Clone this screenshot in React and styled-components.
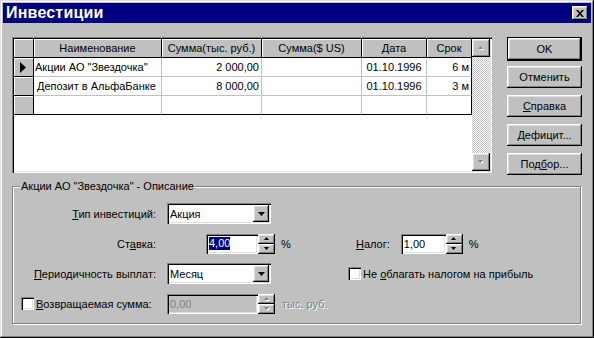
import React from "react";
import styled, { createGlobalStyle } from "styled-components";

const GlobalStyle = createGlobalStyle`
  html, body {
    margin: 0;
    padding: 0;
    background: #c0c0c0;
  }
  * {
    box-sizing: border-box;
  }
`;

const raised = `
  box-shadow: inset -1px -1px #000, inset 1px 1px #fff,
    inset -2px -2px #808080, inset 2px 2px #dfdfdf;
`;

const sunken = `
  box-shadow: inset 1px 1px #808080, inset 2px 2px #000,
    inset -1px -1px #fff, inset -2px -2px #dfdfdf;
`;

const rows = [
  { name: 'Акции АО "Звездочка"', rub: "2 000,00", usd: "", date: "01.10.1996", term: "6 м", current: true },
  { name: "Депозит в АльфаБанке", rub: "8 000,00", usd: "", date: "01.10.1996", term: "3 м" },
  { name: "", rub: "", usd: "", date: "", term: "" },
];

const buttons = [
  { label: "OK", isDefault: true },
  { label: "Отменить" },
  { label: <><u>С</u>правка</> },
  { label: <><u>Д</u>ефицит...</> },
  { label: <>Под<u>б</u>ор...</> },
];

function DownArrow({ color = "#000" }) {
  return (
    <svg width="7" height="4" viewBox="0 0 7 4">
      <path d="M0 0h7L3.5 4z" fill={color} />
    </svg>
  );
}

function SpinArrow({ up, disabled }) {
  const d = up ? "M2.5 0L0 3h5z" : "M0 0h5L2.5 3z";
  return (
    <svg width="6" height="4" viewBox="0 0 6 4">
      {disabled && <path d={d} fill="#fff" transform="translate(1 1)" />}
      <path d={d} fill={disabled ? "#808080" : "#000"} />
    </svg>
  );
}

function Spinner({ disabled }) {
  return (
    <Spin>
      <SpinBtn>
        <SpinArrow up disabled={disabled} />
      </SpinBtn>
      <SpinBtn>
        <SpinArrow disabled={disabled} />
      </SpinBtn>
    </Spin>
  );
}

function Combo({ value }) {
  return (
    <ComboBox>
      <ComboText>{value}</ComboText>
      <DropBtn>
        <DownArrow />
      </DropBtn>
    </ComboBox>
  );
}

export default function App() {
  return (
    <>
      <GlobalStyle />
      <Window>
        <TitleBar>
          <Title>Инвестиции</Title>
          <CloseBtn>
            <svg width="8" height="7" viewBox="0 0 8 7">
              <path d="M0 0h2l2 2.2L6 0h2L5 3.5 8 7H6L4 4.8 2 7H0l3-3.5z" fill="#000" />
            </svg>
          </CloseBtn>
        </TitleBar>

        <Body>
          <TopRow>
            <GridFrame>
              <Table>
                <HeadCell />
                <HeadCell>Наименование</HeadCell>
                <HeadCell>Сумма(тыс. руб.)</HeadCell>
                <HeadCell>Сумма($ US)</HeadCell>
                <HeadCell>Дата</HeadCell>
                <HeadCell>Срок</HeadCell>
                {rows.map((r, i) => {
                  const last = i === rows.length - 1;
                  return (
                    <React.Fragment key={i}>
                      <IndCell>
                        {r.current && (
                          <svg width="6" height="11" viewBox="0 0 6 11">
                            <path d="M0 0l6 5.5L0 11z" fill="#000" />
                          </svg>
                        )}
                      </IndCell>
                      <Cell $last={last} $indent={!r.current}>{r.name}</Cell>
                      <Cell $last={last} $align="right">{r.rub}</Cell>
                      <Cell $last={last} $align="right">{r.usd}</Cell>
                      <Cell $last={last} $align="center">{r.date}</Cell>
                      <Cell $last={last} $edge $align="right">{r.term}</Cell>
                    </React.Fragment>
                  );
                })}
              </Table>
              <Scrollbar>
                <ScrollBtn>
                  <SpinArrow up disabled />
                </ScrollBtn>
                <Track />
                <ScrollBtn>
                  <SpinArrow disabled />
                </ScrollBtn>
              </Scrollbar>
            </GridFrame>

            <ButtonColumn>
              {buttons.map((b, i) => (
                <Button key={i} $default={b.isDefault}>
                  {b.label}
                </Button>
              ))}
            </ButtonColumn>
          </TopRow>

          <Group>
            <Legend>Акции АО "Звездочка" - Описание</Legend>
            <Form>
              <Label>
                <u>Т</u>ип инвестиций:
              </Label>
              <Cell2>
                <Combo value="Акция" />
              </Cell2>
              <span />
              <span />

              <Label>
                Ст<u>а</u>вка:
              </Label>
              <Cell2 $end>
                <Field $w={52}>
                  <Selected>4,00</Selected>
                </Field>
                <Spinner />
              </Cell2>
              <Suffix>%</Suffix>
              <RightCell $pad={8}>
                <InlineLabel>
                  <u>Н</u>алог:
                </InlineLabel>
                <Field $w={45}>1,00</Field>
                <Spinner />
                <Percent>%</Percent>
              </RightCell>

              <Label>
                <u>П</u>ериодичность выплат:
              </Label>
              <Cell2>
                <Combo value="Месяц" />
              </Cell2>
              <span />
              <RightCell>
                <Checkbox />
                <CheckText>
                  Не <u>о</u>благать налогом на прибыль
                </CheckText>
              </RightCell>

              <CheckLabel>
                <Checkbox />
                <CheckText>
                  <u>В</u>озвращаемая сумма:
                </CheckText>
              </CheckLabel>
              <Cell2>
                <Field $w={91} $disabled>
                  0,00
                </Field>
                <Spinner disabled />
              </Cell2>
              <Suffix $disabled $pad={7}>
                тыс. руб.
              </Suffix>
              <span />
            </Form>
          </Group>
        </Body>
      </Window>
    </>
  );
}

const Window = styled.div`
  width: 594px;
  height: 338px;
  padding: 3px;
  background: #c0c0c0;
  font-family: "Liberation Sans", Arial, sans-serif;
  font-size: 11px;
  color: #000;
  box-shadow: inset -1px -1px #000, inset 1px 1px #dfdfdf,
    inset -2px -2px #808080, inset 2px 2px #fff;
  display: flex;
  flex-direction: column;
`;

const TitleBar = styled.div`
  height: 20px;
  background: #000080;
  display: flex;
  align-items: center;
  justify-content: space-between;
  padding: 0 3px 0 3px;
`;

const Title = styled.span`
  color: #fff;
  font-weight: bold;
  font-size: 16px;
  letter-spacing: 0.2px;
`;

const CloseBtn = styled.div`
  width: 16px;
  height: 14px;
  background: #c0c0c0;
  ${raised}
  display: flex;
  align-items: center;
  justify-content: center;
  padding-right: 1px;
`;

const Body = styled.div`
  padding: 14px 9px 0 9px;
  display: flex;
  flex-direction: column;
`;

const TopRow = styled.div`
  display: flex;
  align-items: flex-start;
  height: 136px;
`;

const GridFrame = styled.div`
  width: 480px;
  height: 136px;
  padding: 2px;
  background: #fff;
  ${sunken}
  display: flex;
`;

const Table = styled.div`
  display: grid;
  grid-template-columns: 20px 128px 100px 100px 65px 45px;
  grid-auto-rows: 19px;
  align-content: start;
  width: 458px;
`;

const HeadCell = styled.div`
  background: #c0c0c0;
  border-right: 1px solid #000;
  border-bottom: 1px solid #000;
  box-shadow: inset 1px 1px #fff;
  display: flex;
  align-items: center;
  justify-content: center;
  white-space: nowrap;
  overflow: hidden;
`;

const IndCell = styled(HeadCell)`
  justify-content: flex-start;
  padding-left: 6px;
`;

const Cell = styled.div`
  background: #fff;
  border-right: 1px solid ${(p) => (p.$edge ? "#000" : "#c0c0c0")};
  border-bottom: 1px solid ${(p) => (p.$last ? "#000" : "#c0c0c0")};
  display: flex;
  align-items: center;
  justify-content: ${(p) =>
    p.$align === "right" ? "flex-end" : p.$align === "center" ? "center" : "flex-start"};
  padding: 0 ${(p) => (p.$align === "right" ? "2px" : "1px")} 0
    ${(p) => (p.$indent ? "3px" : "1px")};
  white-space: nowrap;
  overflow: hidden;
`;

const Scrollbar = styled.div`
  width: 18px;
  display: flex;
  flex-direction: column;
`;

const ScrollBtn = styled.div`
  width: 18px;
  height: 18px;
  background: #c0c0c0;
  ${raised}
  display: flex;
  align-items: center;
  justify-content: center;
`;

const Track = styled.div`
  flex: 1;
  background: repeating-conic-gradient(#c0c0c0 0 25%, #fff 0 50%) 0 0 / 2px 2px;
`;

const ButtonColumn = styled.div`
  margin-left: 15px;
  display: flex;
  flex-direction: column;
  gap: 7px;
`;

const Button = styled.div`
  width: 75px;
  height: ${(p) => (p.$default ? "24px" : "22px")};
  margin-bottom: ${(p) => (p.$default ? "-2px" : "0")};
  background: #c0c0c0;
  ${raised}
  border: ${(p) => (p.$default ? "1px solid #000" : "none")};
  display: flex;
  align-items: center;
  justify-content: center;
  font-size: 11px;
`;

const Group = styled.div`
  position: relative;
  margin-top: 13px;
  margin-right: 1px;
  height: 138px;
  border: 1px solid #808080;
  box-shadow: inset 1px 1px #fff, 1px 1px #fff;
  padding-top: 16px;
`;

const Legend = styled.span`
  position: absolute;
  top: -7px;
  left: 7px;
  padding: 0 1px;
  background: #c0c0c0;
  line-height: 13px;
`;

const Form = styled.div`
  display: grid;
  grid-template-columns: 154px 108px 73px 1fr;
  grid-auto-rows: 21px;
  row-gap: 9px;
  align-items: center;
`;

const Label = styled.div`
  text-align: right;
  padding-right: 11px;
  white-space: nowrap;
`;

const CheckLabel = styled.div`
  display: flex;
  align-items: center;
  padding-left: 8px;
  white-space: nowrap;
`;

const Cell2 = styled.div`
  display: flex;
  align-items: center;
  justify-content: ${(p) => (p.$end ? "flex-end" : "flex-start")};
`;

const RightCell = styled.div`
  display: flex;
  align-items: center;
  padding-left: ${(p) => p.$pad || 0}px;
`;

const InlineLabel = styled.span`
  margin-right: 11px;
`;

const ComboBox = styled.div`
  width: 104px;
  height: 21px;
  background: #fff;
  ${sunken}
  padding: 2px;
  display: flex;
  align-items: stretch;
`;

const ComboText = styled.div`
  flex: 1;
  display: flex;
  align-items: center;
  padding-left: 1px;
`;

const DropBtn = styled.div`
  width: 16px;
  background: #c0c0c0;
  ${raised}
  display: flex;
  align-items: center;
  justify-content: center;
`;

const Field = styled.div`
  width: ${(p) => p.$w}px;
  height: 20px;
  background: ${(p) => (p.$disabled ? "#c0c0c0" : "#fff")};
  color: ${(p) => (p.$disabled ? "#808080" : "#000")};
  ${sunken}
  padding: 0 3px;
  display: flex;
  align-items: center;
`;

const Selected = styled.span`
  background: #000080;
  color: #fff;
  line-height: 13px;
`;

const Spin = styled.div`
  width: 17px;
  height: 20px;
  display: flex;
  flex-direction: column;
`;

const SpinBtn = styled.div`
  flex: 1;
  background: #c0c0c0;
  ${raised}
  display: flex;
  align-items: center;
  justify-content: center;
`;

const Suffix = styled.div`
  padding-left: ${(p) => p.$pad || 6}px;
  color: ${(p) => (p.$disabled ? "#808080" : "#000")};
  text-shadow: ${(p) => (p.$disabled ? "1px 1px #fff" : "none")};
`;

const Percent = styled.span`
  margin-left: 6px;
`;

const Checkbox = styled.div`
  width: 13px;
  height: 13px;
  flex: none;
  background: #fff;
  ${sunken}
`;

const CheckText = styled.span`
  margin-left: 2px;
  white-space: nowrap;
`;
